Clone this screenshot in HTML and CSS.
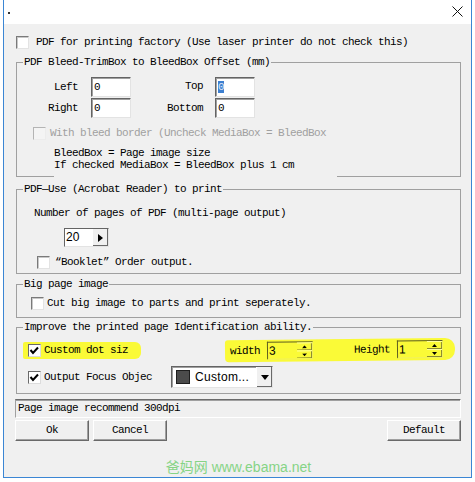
FILE: index.html
```html
<!DOCTYPE html>
<html>
<head>
    <title>PDF Options</title>
    <link rel="stylesheet" href="styles.css">
</head>
<body>
    <div class="dialog">
        <div class="titlebar">
            <span class="dot"></span>
            <svg class="close" width="11" height="11" viewBox="0 0 11 11">
                <path d="M0.5 0.5 L10.5 10.5 M10.5 0.5 L0.5 10.5" stroke="#111" stroke-width="1" fill="none"/>
            </svg>
        </div>

        <div class="dialog-body">
            <div class="check-row top-row">
                <span class="box"></span>
                <span>PDF for printing factory (Use laser printer do not check this)</span>
            </div>

            <fieldset class="group">
                <legend>PDF Bleed-TrimBox to BleedBox Offset (mm)</legend>
                <div class="offset-grid">
                    <span class="lbl lbl-a">Left</span>
                    <span class="field">0</span>
                    <span class="lbl lbl-b lbl-top">Top</span>
                    <span class="field"><span class="sel">0</span></span>
                    <span class="lbl lbl-a">Right</span>
                    <span class="field">0</span>
                    <span class="lbl lbl-b">Bottom</span>
                    <span class="field">0</span>
                </div>
                <div class="check-row disabled">
                    <span class="box"></span>
                    <span>With bleed border (Uncheck MediaBox = BleedBox</span>
                </div>
                <div class="note">BleedBox = Page image size<br>If checked MediaBox = BleedBox plus 1 cm</div>
            </fieldset>

            <fieldset class="group acrobat">
                <legend>PDF—Use (Acrobat Reader) to print</legend>
                <div class="pages-label">Number of pages of PDF (multi-page output)</div>
                <div class="pages-box">
                    <span class="pages-value">20</span>
                    <span class="pages-btn">
                        <svg width="5" height="8" viewBox="0 0 5 8"><path d="M0 0 L5 4 L0 8 Z" fill="#000"/></svg>
                    </span>
                </div>
                <div class="check-row booklet">
                    <span class="box"></span>
                    <span>“Booklet” Order output.</span>
                </div>
            </fieldset>

            <fieldset class="group big">
                <legend>Big page image</legend>
                <div class="check-row cut">
                    <span class="box"></span>
                    <span>Cut big image to parts and print seperately.</span>
                </div>
            </fieldset>

            <fieldset class="group improve">
                <legend>Improve the printed page Identification ability.</legend>
                <div class="dot-row">
                    <div class="mark mark-left">
                        <span class="box checked">
                            <svg width="11" height="11" viewBox="0 0 11 11"><path d="M1.5 5 L4 8 L9 2.5" stroke="#000" stroke-width="2" fill="none"/></svg>
                        </span>
                        <span class="clip">Custom dot siz</span>
                    </div>
                    <div class="mark mark-right">
                        <span>width</span>
                        <span class="spin">
                            <span class="spin-value">3</span>
                            <span class="spin-btns">
                                <span class="spin-btn"><svg width="5" height="3" viewBox="0 0 5 3"><path d="M0 3 L2.5 0 L5 3 Z" fill="#000"/></svg></span>
                                <span class="spin-btn"><svg width="5" height="3" viewBox="0 0 5 3"><path d="M0 0 L2.5 3 L5 0 Z" fill="#000"/></svg></span>
                            </span>
                        </span>
                        <span class="height-lbl">Height</span>
                        <span class="spin">
                            <span class="spin-value">1</span>
                            <span class="spin-btns">
                                <span class="spin-btn"><svg width="5" height="3" viewBox="0 0 5 3"><path d="M0 3 L2.5 0 L5 3 Z" fill="#000"/></svg></span>
                                <span class="spin-btn"><svg width="5" height="3" viewBox="0 0 5 3"><path d="M0 0 L2.5 3 L5 0 Z" fill="#000"/></svg></span>
                            </span>
                        </span>
                    </div>
                </div>
                <div class="focus-row">
                    <span class="box checked">
                        <svg width="11" height="11" viewBox="0 0 11 11"><path d="M1.5 5 L4 8 L9 2.5" stroke="#000" stroke-width="2" fill="none"/></svg>
                    </span>
                    <span>Output Focus Objec</span>
                    <div class="combo">
                        <span class="swatch"></span>
                        <span class="combo-text">Custom...</span>
                        <span class="combo-btn">
                            <svg width="8" height="5" viewBox="0 0 8 5"><path d="M0 0 L8 0 L4 5 Z" fill="#000"/></svg>
                        </span>
                    </div>
                </div>
            </fieldset>

            <div class="status">Page image recommend 300dpi</div>

            <div class="buttons">
                <span class="btn">Ok</span>
                <span class="btn cancel">Cancel</span>
                <span class="btn default">Default</span>
            </div>

            <div class="watermark">爸妈网 www.ebama.net</div>
        </div>
    </div>
</body>
</html>
```

FILE: styles.css
```css
body {
    margin: 0;
    background: #fff;
    color: #000;
    font-family: 'Liberation Mono', monospace;
    font-size: 11px;
    letter-spacing: -0.6px;
}
.dialog {
    margin-left: 3px;
    width: 469px;
    height: 478px;
    box-sizing: border-box;
    border: 1px solid #3b86d4;
    border-top: none;
    background: #f0f0f0;
    overflow: hidden;
}
.titlebar {
    height: 24px;
    background: #fff;
    display: flex;
    align-items: center;
    justify-content: space-between;
    padding: 0 8px 0 4px;
}
.dot {
    width: 2px;
    height: 2px;
    background: #333;
    margin-top: 2px;
}
.close {
    margin-top: -2px;
}
.dialog-body {
    padding: 12px 10px 0 12px;
}

/* checkboxes */
.check-row {
    display: flex;
    align-items: center;
    height: 13px;
    line-height: 13px;
    gap: 3px;
    white-space: nowrap;
}
.box {
    width: 13px;
    height: 13px;
    box-sizing: border-box;
    flex: none;
    background: #fff;
    border: 1px solid;
    border-color: #7a7a7a #e3e3e3 #e3e3e3 #7a7a7a;
    box-shadow: inset 1px 1px 0 #c8c8c8;
    display: flex;
    align-items: center;
    justify-content: center;
}
.box.checked {
    border-color: #6a6a6a #dcdcdc #dcdcdc #6a6a6a;
    box-shadow: none;
}
.top-row {
    gap: 7px;
}
.disabled {
    margin-top: 9px;
    padding-left: 16px;
    gap: 4px;
    color: #a0a0a0;
}
.disabled .box {
    background: #f4f4f4;
    border-color: #b4b4b4 #ececec #ececec #b4b4b4;
    box-shadow: none;
}

/* group boxes */
.group {
    margin: 7px 0 0;
    padding: 0;
    border: 1px solid #a0a0a0;
    min-width: 0;
}
.group legend {
    margin-left: 6px;
    padding: 0 1px;
    line-height: 12px;
}
.offset-grid {
    margin-top: 9px;
    display: grid;
    grid-template-columns: 74px 40px 84px 40px;
    grid-auto-rows: 20px;
    row-gap: 1px;
    align-items: center;
}
.lbl {
    text-align: right;
}
.lbl-a {
    padding-right: 13px;
}
.lbl-b {
    padding-right: 12px;
}
.lbl-top {
    margin-top: -3px;
}
.field {
    height: 20px;
    box-sizing: border-box;
    background: #fff;
    border: 1px solid;
    border-color: #646464 #e3e3e3 #e3e3e3 #646464;
    box-shadow: inset 1px 1px 0 #a0a0a0;
    padding: 2px 0 0 2px;
    line-height: 14px;
}
.sel {
    background: #3d7fd0;
    color: #dfe9f7;
}
.note {
    margin: 7px 0 -1px 37px;
    width: 283px;
    padding-bottom: 6px;
    line-height: 12px;
    background: #f0f0f0;
}

.acrobat {
    margin-top: 6px;
}
.pages-label {
    margin-top: 12px;
    padding-left: 17px;
    line-height: 12px;
}
.pages-box {
    margin: 9px 0 0 47px;
    width: 45px;
    height: 19px;
    box-sizing: border-box;
    display: flex;
    background: #fff;
    border: 1px solid;
    border-color: #646464 #e3e3e3 #e3e3e3 #646464;
}
.pages-value {
    flex: 1;
    font-family: 'Liberation Sans', Arial, sans-serif;
    font-size: 12px;
    letter-spacing: 0;
    line-height: 17px;
    padding-left: 1px;
}
.pages-btn {
    width: 15px;
    display: flex;
    align-items: center;
    justify-content: center;
    background: #f0f0f0;
    border-left: 1px solid #fff;
    box-shadow: inset -1px -1px 0 #696969;
}
.booklet {
    margin-top: 9px;
    padding-left: 20px;
    gap: 5px;
    padding-bottom: 4px;
    height: 13px;
}

.big {
    margin-top: 4px;
}
.cut {
    margin-top: 7px;
    padding-left: 14px;
    padding-bottom: 7px;
}

.improve {
    margin-top: 3px;
    padding-bottom: 5px;
}
.dot-row {
    margin-top: 5px;
    height: 24px;
    display: flex;
    align-items: center;
}
.mark {
    display: flex;
    align-items: center;
    background: #fafa37;
    white-space: nowrap;
}
.mark-left {
    margin-left: 6px;
    width: 118px;
    height: 17px;
    padding-left: 5px;
    gap: 3px;
    border-radius: 2px 6px 6px 2px;
    box-sizing: border-box;
}
.clip {
    line-height: 13px;
}
.mark-right {
    margin-left: 84px;
    width: 230px;
    height: 22px;
    padding-left: 5px;
    box-sizing: border-box;
    border-radius: 3px 10px 10px 4px;
    transform: rotate(-0.6deg);
}
.spin {
    margin-left: 7px;
    width: 46px;
    height: 18px;
    box-sizing: border-box;
    display: flex;
    border: 1px solid;
    border-color: #5e5e20 #f0f060 #f0f060 #5e5e20;
}
.spin-value {
    flex: 1;
    font-family: 'Liberation Sans', Arial, sans-serif;
    font-size: 12px;
    letter-spacing: 0;
    line-height: 16px;
    padding-left: 1px;
}
.spin-btns {
    width: 15px;
    display: flex;
    flex-direction: column;
}
.spin-btn {
    flex: 1;
    display: flex;
    align-items: center;
    justify-content: center;
    border-top: 1px solid #ffff9a;
    box-shadow: inset -1px -1px 0 #8a8a30;
}
.height-lbl {
    margin-left: 41px;
}

.focus-row {
    margin-top: 4px;
    height: 22px;
    padding-left: 11px;
    display: flex;
    align-items: center;
    gap: 3px;
    white-space: nowrap;
}
.combo {
    margin-left: 16px;
    width: 102px;
    height: 22px;
    box-sizing: border-box;
    display: flex;
    align-items: center;
    background: #fff;
    border: 1px solid;
    border-color: #646464 #e3e3e3 #e3e3e3 #646464;
    box-shadow: inset 1px 1px 0 #a0a0a0;
}
.swatch {
    width: 14px;
    height: 14px;
    box-sizing: border-box;
    margin-left: 4px;
    background: #4b4b4b;
    border: 1px solid #1e1e1e;
}
.combo-text {
    flex: 1;
    margin-left: 5px;
    font-family: 'Liberation Sans', Arial, sans-serif;
    font-size: 12px;
    letter-spacing: 0.3px;
}
.combo-btn {
    width: 15px;
    height: 20px;
    display: flex;
    align-items: center;
    justify-content: center;
    background: #f0f0f0;
    border-left: 1px solid #fff;
    box-shadow: inset -1px -1px 0 #696969;
}

.status {
    margin: 5px 0 0 -1px;
    height: 19px;
    box-sizing: border-box;
    border: 1px solid;
    border-color: #6b6b6b #fff #fff #a0a0a0;
    box-shadow: inset 0 1px 0 #a0a0a0;
    padding-left: 2px;
    line-height: 17px;
}

.buttons {
    margin-top: 2px;
    display: flex;
}
.btn {
    width: 74px;
    height: 21px;
    box-sizing: border-box;
    border: 1px solid;
    border-color: #fff #696969 #696969 #fff;
    box-shadow: inset -1px -1px 0 #a0a0a0;
    text-align: center;
    line-height: 18px;
}
.buttons .btn:first-child {
    margin-left: -1px;
}
.cancel {
    margin-left: 4px;
}
.default {
    margin-left: auto;
}

.watermark {
    margin-top: 18px;
    text-align: center;
    font-family: 'Liberation Sans', 'Noto Sans CJK SC', sans-serif;
    font-size: 14px;
    letter-spacing: 0;
    line-height: 17px;
    color: #86d486;
}
```
